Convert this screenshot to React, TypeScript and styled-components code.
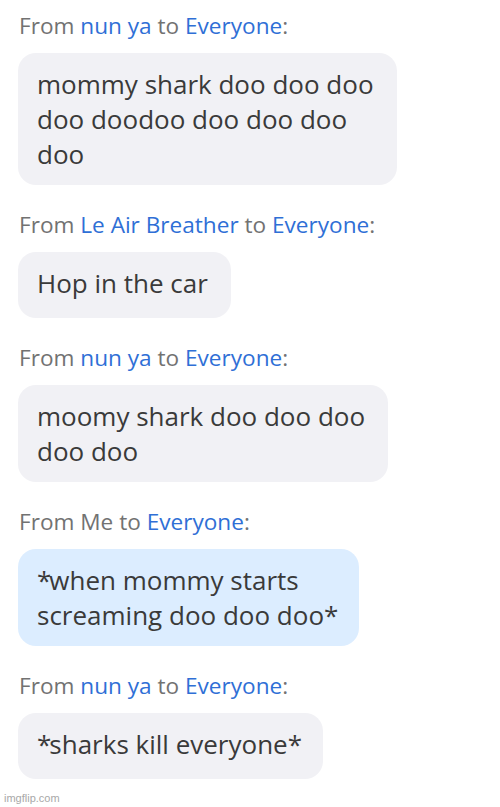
import React from "react";
import styled, { createGlobalStyle } from "styled-components";

const Global = createGlobalStyle`
  html, body { margin: 0; padding: 0; background: #ffffff; }
  body { width: 500px; height: 807px; overflow: hidden; }
`;

const Page = styled.div`
  position: relative;
  width: 500px;
  height: 807px;
  box-sizing: border-box;
  padding: 13px 0 0 18px;
  display: flex;
  flex-direction: column;
  gap: 27px;
  font-family: "Open Sans", "Noto Sans", sans-serif;
`;

const Message = styled.div`
  display: flex;
  flex-direction: column;
  align-items: flex-start;
  gap: 14px;
`;

const Header = styled.div`
  font-size: 22.6px;
  line-height: 26px;
  color: #727272;
  padding-left: 1px;
  white-space: nowrap;
`;

const Name = styled.span`
  color: #2f6fd6;
`;

const Bubble = styled.div<{ $mine?: boolean }>`
  box-sizing: border-box;
  min-height: 66px;
  padding: 13.5px 23px 13.5px 19px;
  border-radius: 18px;
  background: ${(p) => (p.$mine ? "#dcedff" : "#f1f1f5")};
  color: #3a3a3a;
  font-size: 26px;
  line-height: 35px;
`;

const Line = styled.div`
  white-space: nowrap;
`;

const Star = styled.span`
  letter-spacing: -2px;
`;

const Watermark = styled.div`
  position: absolute;
  left: 4px;
  bottom: 3px;
  font-family: "Liberation Sans", Arial, sans-serif;
  font-size: 11px;
  color: #a8a8a8;
`;

type Msg = { from: string; mine?: boolean; lines: string[] };

const messages: Msg[] = [
  { from: "nun ya", lines: ["mommy shark doo doo doo", "doo doodoo doo doo doo", "doo"] },
  { from: "Le Air Breather", lines: ["Hop in the car"] },
  { from: "nun ya", lines: ["moomy shark doo doo doo", "doo doo"] },
  { from: "Me", mine: true, lines: ["*when mommy starts", "screaming doo doo doo*"] },
  { from: "nun ya", lines: ["*sharks kill everyone*"] },
];

const renderLine = (l: string) =>
  l.split(/(\*)/).map((part, k) =>
    part === "*" ? <Star key={k}>*</Star> : <React.Fragment key={k}>{part}</React.Fragment>
  );

export default function App() {
  return (
    <>
      <Global />
      <Page>
        {messages.map((m, i) => (
          <Message key={i}>
            <Header>
              From {m.mine ? m.from : <Name>{m.from}</Name>} to <Name>Everyone</Name>:
            </Header>
            <Bubble $mine={m.mine}>
              {m.lines.map((l, j) => (
                <Line key={j}>{renderLine(l)}</Line>
              ))}
            </Bubble>
          </Message>
        ))}
        <Watermark>imgflip.com</Watermark>
      </Page>
    </>
  );
}
